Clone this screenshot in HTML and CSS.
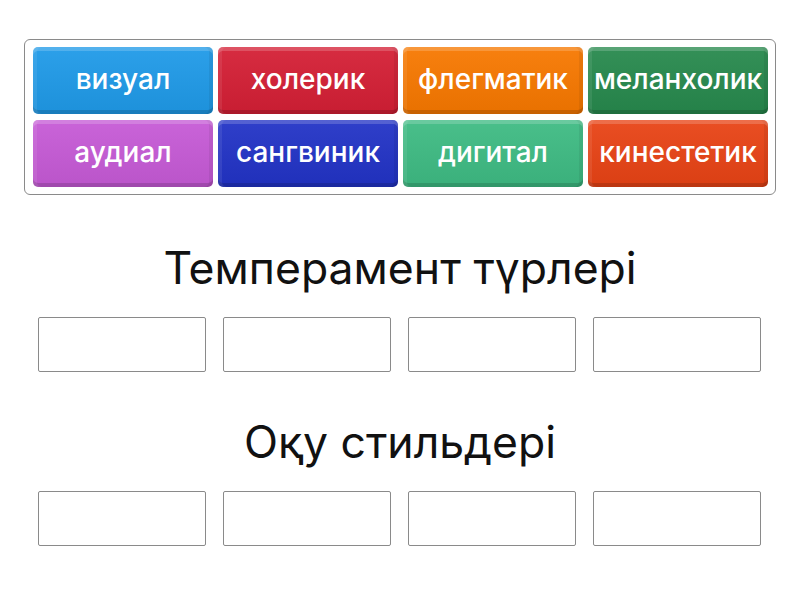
FILE: index.html
```html
<!DOCTYPE html>
<html lang="kk">
<head>
<meta charset="utf-8">
<link rel="stylesheet" href="styles.css">
</head>
<body>
<div class="bank">
  <div class="tile c-blue">визуал</div>
  <div class="tile c-red">холерик</div>
  <div class="tile c-orange">флегматик</div>
  <div class="tile c-green">меланхолик</div>
  <div class="tile c-purple">аудиал</div>
  <div class="tile c-navy">сангвиник</div>
  <div class="tile c-mint">дигитал</div>
  <div class="tile c-vermil">кинестетик</div>
</div>
<h2 class="group-title first">Темперамент түрлері</h2>
<div class="slots">
  <div class="slot"></div><div class="slot"></div><div class="slot"></div><div class="slot"></div>
</div>
<h2 class="group-title">Оқу стильдері</h2>
<div class="slots">
  <div class="slot"></div><div class="slot"></div><div class="slot"></div><div class="slot"></div>
</div>
</body>
</html>
```
FILE: styles.css
```css
html, body {
  margin: 0;
  padding: 0;
  background: #ffffff;
  font-family: Inter, Roboto, "Liberation Sans", sans-serif;
}
.bank {
  margin: 39px 0 0 24px;
  width: 734px;
  padding: 7px 8px 7px 8px;
  border: 1px solid #8a8a8a;
  border-radius: 6px;
  display: grid;
  grid-template-columns: repeat(4, 180px);
  grid-auto-rows: 67px;
  column-gap: 5px;
  row-gap: 6px;
}
.tile {
  border-radius: 5px;
  color: #ffffff;
  font-size: 28px;
  font-weight: 500;
  white-space: nowrap;
  display: flex;
  align-items: center;
  justify-content: center;
  padding-bottom: 3px;
  box-sizing: border-box;
  background-image: linear-gradient(to bottom, rgba(255,255,255,0.06), rgba(0,0,0,0.06));
  box-shadow:
    inset 0 4px 0 rgba(255,255,255,0.18),
    inset 4px 0 0 rgba(255,255,255,0.08),
    inset -4px 0 0 rgba(0,0,0,0.06),
    inset 0 -4px 0 rgba(0,0,0,0.14);
}
.c-blue { background-color: #1f9ae8; }
.c-red { background-color: #d41f35; }
.c-orange { background-color: #f77800; }
.c-green { background-color: #27894d; }
.c-purple { background-color: #c65ad6; }
.c-navy { background-color: #2233c6; }
.c-mint { background-color: #3ebb83; }
.c-vermil { background-color: #e84315; }
.group-title {
  margin: 40px 0 19px 0;
  height: 60px;
  line-height: 60px;
  text-align: center;
  font-size: 44.5px;
  font-weight: 400;
  color: #111111;
}
.group-title.first {
  margin-top: 43px;
}
.slots {
  display: flex;
  justify-content: center;
  gap: 17px;
  padding-right: 2px;
}
.slot {
  width: 166px;
  height: 53px;
  border: 1px solid #8a8a8a;
  border-radius: 2px;
}
```
